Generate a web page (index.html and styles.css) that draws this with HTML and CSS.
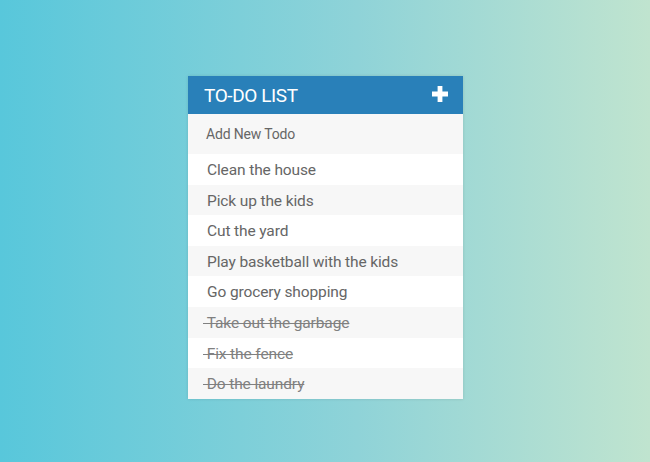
FILE: index.html
```
<!DOCTYPE html>
<html>
<head>
<meta charset="utf-8">
<link rel="stylesheet" href="styles.css">
</head>
<body>
<div class="page">
  <div class="card">
    <div class="header">
      <h1 class="title">To-Do List</h1>
      <svg class="plus" width="16" height="16" viewBox="0 0 16 16"><path d="M5.6 0h4.8v5.6H16v4.8h-5.6V16H5.6v-5.6H0V5.6h5.6z" fill="#fff"/></svg>
    </div>
    <div class="add">Add New Todo</div>
    <ul class="list">
      <li class="item">Clean the house</li>
      <li class="item alt">Pick up the kids</li>
      <li class="item">Cut the yard</li>
      <li class="item alt">Play basketball with the kids</li>
      <li class="item">Go grocery shopping</li>
      <li class="item alt done">&nbsp;Take out the garbage</li>
      <li class="item done">&nbsp;Fix the fence</li>
      <li class="item alt done">&nbsp;Do the laundry</li>
    </ul>
  </div>
</div>
</body>
</html>
```
FILE: styles.css
```
html, body {
  margin: 0;
  height: 100%;
}
body {
  background: linear-gradient(90deg, #58c7db 0%, #8fd3d8 55%, #c0e4cf 100%);
  font-family: Roboto, "Liberation Sans", sans-serif;
}
.page {
  display: flex;
  justify-content: center;
  padding-top: 76px;
  padding-left: 1px;
}
.card {
  width: 275px;
  background: #fff;
  box-shadow: 0 0 3px rgba(0,0,0,0.12);
}
.header {
  height: 38px;
  background: #2980b9;
  display: flex;
  align-items: center;
  justify-content: space-between;
  padding: 0 15px 0 16px;
}
.title {
  margin: 0;
  font-size: 19px;
  letter-spacing: -0.4px;
  font-weight: 400;
  text-transform: uppercase;
  color: #fff;
  line-height: 1;
}
.plus {
  display: block;
  margin-top: -2px;
}
.add {
  height: 40px;
  background: #f7f7f7;
  display: flex;
  align-items: center;
  padding-left: 18px;
  font-size: 14px;
  letter-spacing: -0.17px;
  color: #666;
}
.list {
  list-style: none;
  margin: 0;
  padding: 0;
}
.item {
  box-sizing: border-box;
  height: 30.6px;
  line-height: 27.6px;
  padding: 3px 0 0 19px;
  font-size: 15.5px;
  letter-spacing: -0.12px;
  color: #666;
  background: #fff;
}
.item.alt {
  background: #f7f7f7;
}
.item.done {
  padding-left: 15px;
  text-decoration: line-through;
  color: #808080;
}
```
